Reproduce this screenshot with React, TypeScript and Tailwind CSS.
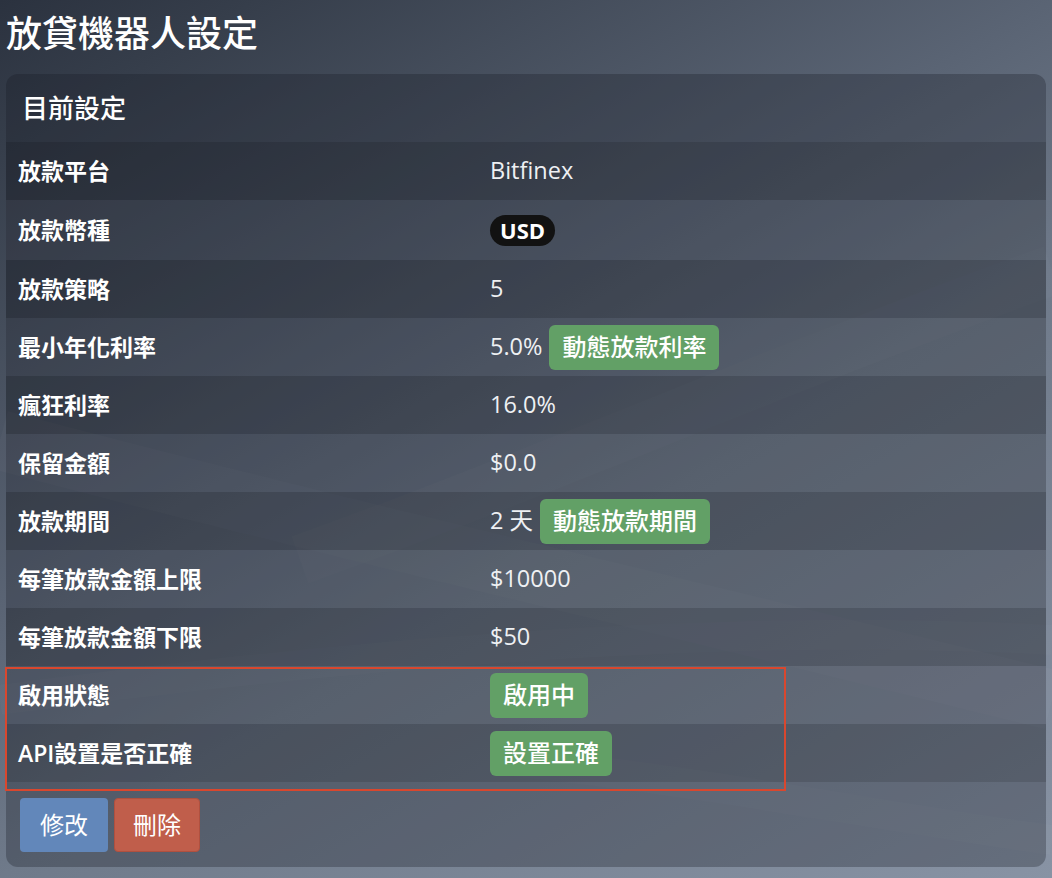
import React from "react";

function GreenBadge({ children }: { children: React.ReactNode }) {
  return (
    <span className="inline-flex h-[45px] items-center rounded-[6px] bg-[#62a066] px-[13px] text-[24px] leading-none font-medium text-white">
      {children}
    </span>
  );
}

const rows: { label: string; value: React.ReactNode; h: string }[] = [
  { label: "放款平台", h: "h-[58px]", value: <span>Bitfinex</span> },
  {
    label: "放款幣種",
    h: "h-[60px]",
    value: (
      <span className="inline-flex h-[31px] items-center rounded-full bg-[#121212] px-[10px] text-[22px] leading-none font-bold text-white">
        USD
      </span>
    ),
  },
  { label: "放款策略", h: "h-[58px]", value: <span>5</span> },
  {
    label: "最小年化利率",
    h: "h-[58px]",
    value: (
      <span className="flex items-center gap-[7px]">
        <span>5.0%</span>
        <GreenBadge>動態放款利率</GreenBadge>
      </span>
    ),
  },
  { label: "瘋狂利率", h: "h-[58px]", value: <span>16.0%</span> },
  { label: "保留金額", h: "h-[58px]", value: <span>$0.0</span> },
  {
    label: "放款期間",
    h: "h-[58px]",
    value: (
      <span className="flex items-center gap-[7px]">
        <span>2 天</span>
        <GreenBadge>動態放款期間</GreenBadge>
      </span>
    ),
  },
  { label: "每筆放款金額上限", h: "h-[58px]", value: <span>$10000</span> },
  { label: "每筆放款金額下限", h: "h-[58px]", value: <span>$50</span> },
  { label: "啟用狀態", h: "h-[58px]", value: <GreenBadge>啟用中</GreenBadge> },
  { label: "API設置是否正確", h: "h-[58px]", value: <GreenBadge>設置正確</GreenBadge> },
];

export default function App() {
  return (
    <div
      className="relative h-[878px] w-full overflow-hidden bg-[linear-gradient(150deg,#2b323f_0%,#363e4b_10%,#5a6474_41%,#6f7a8a_59%,#8893a4_100%)] text-white"
      style={{ fontFamily: '"Open Sans", "Noto Sans CJK TC", sans-serif' }}
    >
      <svg
        className="pointer-events-none absolute inset-0 h-full w-full"
        viewBox="0 0 1052 878"
        preserveAspectRatio="none"
      >
        <path d="M0 440 C 300 520, 650 600, 1052 700" stroke="rgba(255,255,255,0.025)" strokeWidth="60" fill="none" />
        <path d="M300 560 C 550 470, 800 360, 1052 270" stroke="rgba(255,255,255,0.02)" strokeWidth="50" fill="none" />
        <path d="M0 700 C 300 660, 700 620, 1052 640" stroke="rgba(255,255,255,0.02)" strokeWidth="30" fill="none" />
        <path d="M500 760 C 700 780, 900 820, 1052 840" stroke="rgba(255,255,255,0.02)" strokeWidth="30" fill="none" />
      </svg>

      <div className="relative px-[6px]">
        <h1 className="pt-[12px] text-[36px] leading-[44px] font-medium text-white">放貸機器人設定</h1>

        <div className="mt-[18px] overflow-hidden rounded-[12px] bg-[rgba(22,26,36,0.3)]">
          <div className="flex h-[68px] items-center px-[16px] text-[26px] font-medium">目前設定</div>

          <div className="flex flex-col">
            {rows.map((r, i) => (
              <div
                key={r.label}
                className={`flex ${r.h} items-center ${
                  i % 2 === 0 ? "bg-[rgba(0,0,0,0.12)]" : "bg-[rgba(255,255,255,0.02)]"
                }`}
              >
                <div className="w-[484px] shrink-0 pl-[12px] text-[23px] font-semibold text-white">{r.label}</div>
                <div className="flex items-center text-[23.5px] text-[#eef0f3]">{r.value}</div>
              </div>
            ))}
          </div>

          <div className="flex gap-[6px] px-[14px] pt-[16px] pb-[15px]">
            <button className="h-[54px] w-[88px] rounded-[4px] bg-[#6287ba] text-[24px] text-white">修改</button>
            <button className="h-[54px] w-[86px] rounded-[4px] border border-[#b0503f] bg-[#c05e4b] text-[24px] text-white">
              刪除
            </button>
          </div>
        </div>
      </div>

      <div className="pointer-events-none absolute top-[667px] left-[5px] h-[124px] w-[781px] border-2 border-[#d9472e]" />
    </div>
  );
}
